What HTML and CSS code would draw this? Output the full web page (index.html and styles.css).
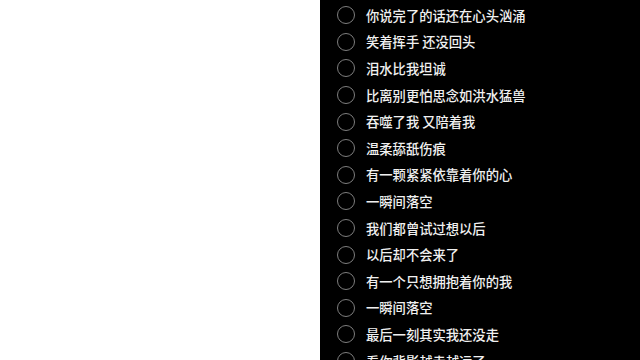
FILE: index.html
```html
<!DOCTYPE html>
<html lang="zh-CN">
  <head>
    <meta charset="UTF-8" />
    <meta name="viewport" content="width=device-width, initial-scale=1.0" />
    <title>歌词</title>
    <link rel="stylesheet" href="styles.css">
  </head>
  <body>
    <div class="blank"></div>
    <div class="panel">
      <ul class="lines">
        <li class="line"><span class="dot"></span>你说完了的话还在心头汹涌</li>
        <li class="line"><span class="dot"></span>笑着挥手 还没回头</li>
        <li class="line"><span class="dot"></span>泪水比我坦诚</li>
        <li class="line"><span class="dot"></span>比离别更怕思念如洪水猛兽</li>
        <li class="line"><span class="dot"></span>吞噬了我 又陪着我</li>
        <li class="line"><span class="dot"></span>温柔舔舐伤痕</li>
        <li class="line"><span class="dot"></span>有一颗紧紧依靠着你的心</li>
        <li class="line"><span class="dot"></span>一瞬间落空</li>
        <li class="line"><span class="dot"></span>我们都曾试过想以后</li>
        <li class="line"><span class="dot"></span>以后却不会来了</li>
        <li class="line"><span class="dot"></span>有一个只想拥抱着你的我</li>
        <li class="line"><span class="dot"></span>一瞬间落空</li>
        <li class="line"><span class="dot"></span>最后一刻其实我还没走</li>
        <li class="line"><span class="dot"></span>看你背影越走越远了</li>
      </ul>
    </div>
  </body>
</html>
```

FILE: styles.css
```css
html, body {
  margin: 0;
  height: 100%;
}

body {
  display: flex;
  overflow: hidden;
  font-family: "Noto Sans CJK SC", "Noto Sans", sans-serif;
}

.blank {
  width: 320px;
  background: #fff;
}

.panel {
  flex: 1;
  background: #000;
  overflow: hidden;
}

.lines {
  list-style: none;
  margin: 0;
  padding: 2px 0 0 17px;
}

.line {
  display: flex;
  align-items: center;
  height: 26.6px;
  color: #f0f0f0;
  font-size: 13.3px;
  font-weight: 500;
}

.dot {
  width: 16px;
  height: 16px;
  border: 1.5px solid #7e7e7e;
  border-radius: 50%;
  margin-right: 11px;
  flex-shrink: 0;
}
```
